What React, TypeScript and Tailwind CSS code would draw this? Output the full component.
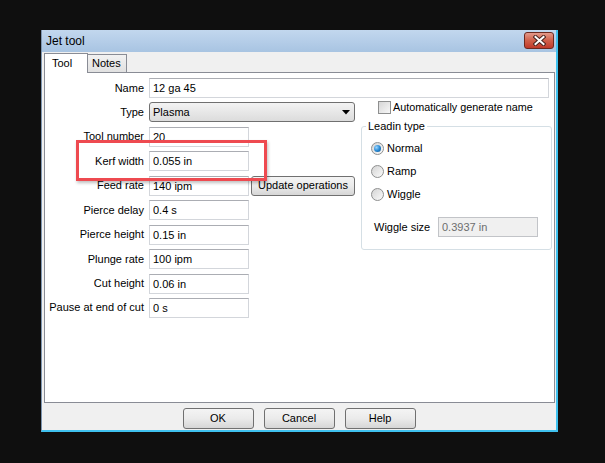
import type { ReactNode } from 'react';

const inputCls =
  'h-[20px] border border-[#d3d6db] border-t-[#abadb3] bg-white pl-[3px] text-[11px] text-black outline-none';

function Row({ label, children }: { label: string; children: ReactNode }) {
  return (
    <div className="flex h-[20px] items-center">
      <span className="w-[99px] shrink-0 text-right">{label}</span>
      <div className="ml-[5px] flex items-center">{children}</div>
    </div>
  );
}

function Field({ value, width = 'w-[100px]' }: { value: string; width?: string }) {
  return <input readOnly value={value} className={`${inputCls} ${width}`} />;
}

function Radio({ label, checked = false }: { label: string; checked?: boolean }) {
  return (
    <div className="flex h-[13px] items-center">
      <span className="flex h-[13px] w-[13px] items-center justify-center rounded-full border border-[#8e8f8f] bg-linear-to-br from-[#d4d4d4] to-[#fbfbfb]">
        {checked && (
          <span className="h-[7px] w-[7px] rounded-full bg-radial-[at_35%_35%] from-[#9ad6ff] via-[#2a8ad4] to-[#0a4f8c]" />
        )}
      </span>
      <span className="ml-[3px]">{label}</span>
    </div>
  );
}

function DlgButton({ children }: { children: ReactNode }) {
  return (
    <button
      type="button"
      className="h-[21px] w-[71px] rounded-[3px] border border-[#707070] bg-linear-to-b from-[#f4f4f4] via-[#ebebeb] to-[#d6d6d6] text-[11px] text-black"
    >
      {children}
    </button>
  );
}

export default function App() {
  return (
    <div className="relative h-[463px] w-[605px] overflow-hidden bg-[#0f0f0f] pl-[41px] pt-[30px] font-['Liberation_Sans',Arial,sans-serif] text-[11px] leading-[13px] text-black">
      <div className="flex h-[402px] w-[517px] flex-col border-b-2 border-l border-r-2 border-b-[#3fc1ee] border-l-[#7d95b0] border-r-[#3fc1ee] bg-[#f0f0f0]">
        {/* Title bar */}
        <div className="flex h-[22px] shrink-0 items-start justify-between bg-linear-to-b from-[#c2d7ee] to-[#a8c4e2]">
          <span className="pl-[4px] pt-[4px] text-[12px] leading-[15px]">Jet tool</span>
          <div className="mr-[2px] mt-[2px] flex h-[17px] w-[30px] items-center justify-center rounded-[3px] border border-[#6d2a20] bg-linear-to-b from-[#e3998a] via-[#d0604a] to-[#c0392a]">
            <svg width="13" height="11" viewBox="0 0 13 11">
              <path d="M2.5 2 L10.5 9 M10.5 2 L2.5 9" stroke="#4a2520" strokeWidth="4" strokeLinecap="square" />
              <path d="M2.5 2 L10.5 9 M10.5 2 L2.5 9" stroke="#ffffff" strokeWidth="2" strokeLinecap="square" />
            </svg>
          </div>
        </div>

        {/* Tabs */}
        <div className="flex h-[20px] shrink-0 items-end pl-[2px] pt-[1px]">
          <div className="relative z-10 -mb-px flex h-[20px] w-[44px] items-center border border-b-0 border-[#898c95] bg-white pl-[7px]">
            Tool
          </div>
          <div className="-ml-px flex h-[18px] w-[40px] items-center border border-b-0 border-[#898c95] bg-linear-to-b from-[#f2f2f2] to-[#e1e1e1] pl-[4px]">
            Notes
          </div>
        </div>

        {/* Panel */}
        <div className="ml-[2px] mr-[1px] h-[331px] shrink-0 border border-[#898c95] bg-white pt-[5px]">
          <div className="flex flex-col gap-[4.44px]">
            <Row label="Name">
              <Field value="12 ga 45" width="w-[400px]" />
            </Row>
            <div className="flex">
              <div className="flex w-[310px] flex-col gap-[4.44px]">
                <Row label="Type">
                  <div className="flex h-[20px] w-[206px] items-center justify-between rounded-[3px] border border-[#707070] bg-linear-to-b from-[#f3f3f3] to-[#dcdcdc] pl-[3px] pr-[4px]">
                    <span>Plasma</span>
                    <svg width="8" height="5" viewBox="0 0 8 5">
                      <path d="M0 0 H8 L4 4.5 Z" fill="#000" />
                    </svg>
                  </div>
                </Row>
                <Row label="Tool number">
                  <Field value="20" />
                </Row>
                <Row label="Kerf width">
                  <Field value="0.055 in" />
                </Row>
                <Row label="Feed rate">
                  <Field value="140 ipm" />
                  <button
                    type="button"
                    className="ml-[2px] h-[20px] w-[104px] rounded-[3px] border border-[#707070] bg-linear-to-b from-[#f4f4f4] via-[#ebebeb] to-[#d6d6d6] text-[11px] text-black"
                  >
                    Update operations
                  </button>
                </Row>
                <Row label="Pierce delay">
                  <Field value="0.4 s" />
                </Row>
                <Row label="Pierce height">
                  <Field value="0.15 in" />
                </Row>
                <Row label="Plunge rate">
                  <Field value="100 ipm" />
                </Row>
                <Row label="Cut height">
                  <Field value="0.06 in" />
                </Row>
                <Row label="Pause at end of cut">
                  <Field value="0 s" />
                </Row>
              </div>

              <div className="ml-[6px] w-[191px]">
                <div className="-mt-px flex h-[13px] items-center pl-[17px]">
                  <span className="h-[13px] w-[13px] border border-[#8e8f8f] bg-linear-to-br from-[#d6d6d6] to-[#f7f7f7]" />
                  <span className="ml-[2px] text-[10.8px]">Automatically generate name</span>
                </div>
                <fieldset className="mt-[6px] rounded-[3px] border border-[#d5dfe5] pb-[12px]">
                  <legend className="ml-[4px] px-[2px] leading-[13px]">Leadin type</legend>
                  <div className="flex flex-col gap-[10px] pl-[9px] pt-[9px]">
                    <Radio label="Normal" checked />
                    <Radio label="Ramp" />
                    <Radio label="Wiggle" />
                  </div>
                  <div className="mt-[16px] flex h-[20px] items-center pl-[12px]">
                    <span className="w-[64px]">Wiggle size</span>
                    <input
                      readOnly
                      value="0.3937 in"
                      className="h-[20px] w-[100px] border border-[#c2c4c8] bg-[#f0f0f0] pl-[3px] text-[11px] text-[#6d6d6d] outline-none"
                    />
                  </div>
                </fieldset>
              </div>
            </div>
          </div>
        </div>

        {/* Buttons */}
        <div className="flex flex-1 justify-center gap-[10px] pt-[5px]">
          <DlgButton>OK</DlgButton>
          <DlgButton>Cancel</DlgButton>
          <DlgButton>Help</DlgButton>
        </div>
      </div>

      {/* Annotation highlight */}
      <div className="absolute left-[76px] top-[140px] h-[41px] w-[191px] border-[3px] border-[#ee4a50] shadow-[1px_2px_3px_rgba(0,0,0,0.25)]" />
    </div>
  );
}
